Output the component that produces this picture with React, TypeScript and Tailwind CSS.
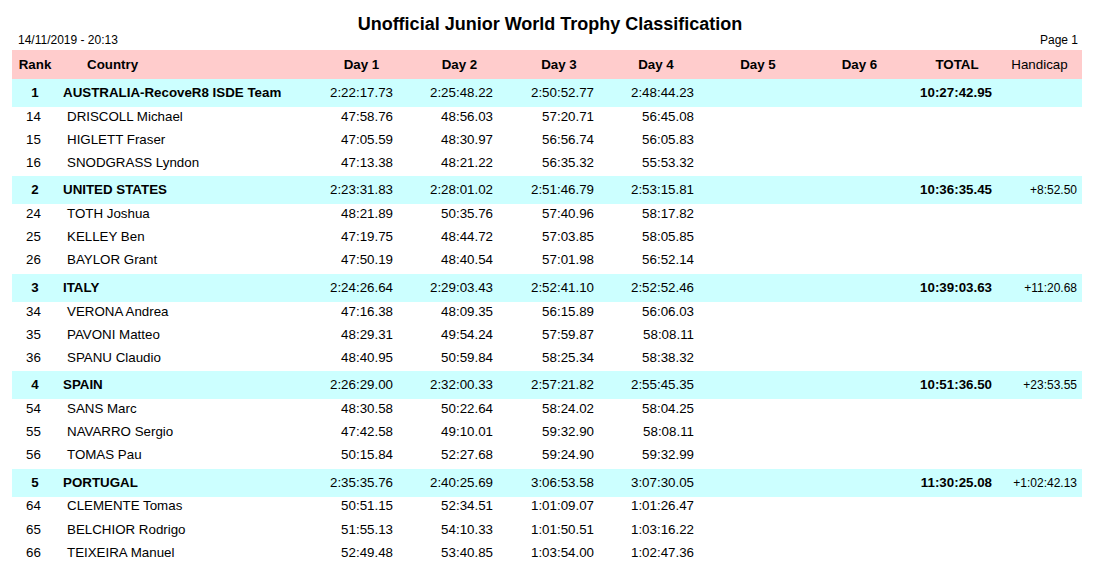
type Rider = { rank: number; name: string; days: string[] };
type Team = {
  rank: number;
  country: string;
  days: string[];
  total: string;
  handicap: string;
  riders: Rider[];
};

const teams: Team[] = [
  {
    rank: 1,
    country: "AUSTRALIA-RecoveR8 ISDE Team",
    days: ["2:22:17.73", "2:25:48.22", "2:50:52.77", "2:48:44.23"],
    total: "10:27:42.95",
    handicap: "",
    riders: [
      { rank: 14, name: "DRISCOLL Michael", days: ["47:58.76", "48:56.03", "57:20.71", "56:45.08"] },
      { rank: 15, name: "HIGLETT Fraser", days: ["47:05.59", "48:30.97", "56:56.74", "56:05.83"] },
      { rank: 16, name: "SNODGRASS Lyndon", days: ["47:13.38", "48:21.22", "56:35.32", "55:53.32"] },
    ],
  },
  {
    rank: 2,
    country: "UNITED STATES",
    days: ["2:23:31.83", "2:28:01.02", "2:51:46.79", "2:53:15.81"],
    total: "10:36:35.45",
    handicap: "+8:52.50",
    riders: [
      { rank: 24, name: "TOTH Joshua", days: ["48:21.89", "50:35.76", "57:40.96", "58:17.82"] },
      { rank: 25, name: "KELLEY Ben", days: ["47:19.75", "48:44.72", "57:03.85", "58:05.85"] },
      { rank: 26, name: "BAYLOR Grant", days: ["47:50.19", "48:40.54", "57:01.98", "56:52.14"] },
    ],
  },
  {
    rank: 3,
    country: "ITALY",
    days: ["2:24:26.64", "2:29:03.43", "2:52:41.10", "2:52:52.46"],
    total: "10:39:03.63",
    handicap: "+11:20.68",
    riders: [
      { rank: 34, name: "VERONA Andrea", days: ["47:16.38", "48:09.35", "56:15.89", "56:06.03"] },
      { rank: 35, name: "PAVONI Matteo", days: ["48:29.31", "49:54.24", "57:59.87", "58:08.11"] },
      { rank: 36, name: "SPANU Claudio", days: ["48:40.95", "50:59.84", "58:25.34", "58:38.32"] },
    ],
  },
  {
    rank: 4,
    country: "SPAIN",
    days: ["2:26:29.00", "2:32:00.33", "2:57:21.82", "2:55:45.35"],
    total: "10:51:36.50",
    handicap: "+23:53.55",
    riders: [
      { rank: 54, name: "SANS Marc", days: ["48:30.58", "50:22.64", "58:24.02", "58:04.25"] },
      { rank: 55, name: "NAVARRO Sergio", days: ["47:42.58", "49:10.01", "59:32.90", "58:08.11"] },
      { rank: 56, name: "TOMAS Pau", days: ["50:15.84", "52:27.68", "59:24.90", "59:32.99"] },
    ],
  },
  {
    rank: 5,
    country: "PORTUGAL",
    days: ["2:35:35.76", "2:40:25.69", "3:06:53.58", "3:07:30.05"],
    total: "11:30:25.08",
    handicap: "+1:02:42.13",
    riders: [
      { rank: 64, name: "CLEMENTE Tomas", days: ["50:51.15", "52:34.51", "1:01:09.07", "1:01:26.47"] },
      { rank: 65, name: "BELCHIOR Rodrigo", days: ["51:55.13", "54:10.33", "1:01:50.51", "1:03:16.22"] },
      { rank: 66, name: "TEIXEIRA Manuel", days: ["52:49.48", "53:40.85", "1:03:54.00", "1:02:47.36"] },
    ],
  },
];

// body column widths (value right-aligned)
const dayWidths = ["w-[81px]", "w-[100px]", "w-[101px]", "w-[100px]"];

function DayCells({ days }: { days: string[] }) {
  return (
    <>
      {days.map((d, i) => (
        <div key={i} className={`${dayWidths[i]} shrink-0 text-right`}>
          {d}
        </div>
      ))}
      {/* Day 5 / Day 6 are empty */}
      <div className="w-[100px] shrink-0" />
      <div className="w-[100px] shrink-0" />
    </>
  );
}

function TeamRow({ team }: { team: Team }) {
  return (
    <div className="flex h-[28px] items-center bg-[#ccffff]">
      <div className="w-[46px] shrink-0 text-center font-bold">{team.rank}</div>
      <div className="w-[254px] shrink-0 pl-[5px] font-bold">{team.country}</div>
      <DayCells days={team.days} />
      <div className="w-[98px] shrink-0 text-right font-bold">{team.total}</div>
      <div className="w-[85px] shrink-0 text-right text-[12px]">{team.handicap}</div>
    </div>
  );
}

function RiderRow({ rider }: { rider: Rider }) {
  return (
    <div className="flex h-[23.17px] items-center pb-[4px]">
      <div className="w-[46px] shrink-0 pl-[14px]">{rider.rank}</div>
      <div className="w-[254px] shrink-0 pl-[9px]">{rider.name}</div>
      <DayCells days={rider.days} />
    </div>
  );
}

export default function App() {
  return (
    <div className="h-[564px] w-[1094px] overflow-hidden bg-white text-black font-['Liberation_Sans',Arial,sans-serif]">
      {/* Title */}
      <div className="pt-[15px] pl-[6px] text-center text-[18px] font-bold leading-[18px]">
        Unofficial Junior World Trophy Classification
      </div>

      {/* Date / page line */}
      <div className="flex justify-between pl-[18px] pr-[16px] text-[12px] leading-[14px]">
        <span>14/11/2019 - 20:13</span>
        <span>Page 1</span>
      </div>

      {/* Table */}
      <div className="mx-[12px] mt-[3px] w-[1070px] text-[13.33px] leading-[16px]">
        <div className="flex h-[29px] items-center bg-[#ffcccc] font-bold">
          <div className="w-[46px] shrink-0 text-center">Rank</div>
          <div className="w-[254px] shrink-0 pl-[29px]">Country</div>
          <div className="w-[99px] shrink-0 text-center">Day 1</div>
          <div className="w-[97px] shrink-0 text-center">Day 2</div>
          <div className="w-[102px] shrink-0 text-center">Day 3</div>
          <div className="w-[92px] shrink-0 text-center">Day 4</div>
          <div className="w-[112px] shrink-0 text-center">Day 5</div>
          <div className="w-[91px] shrink-0 text-center">Day 6</div>
          <div className="w-[104px] shrink-0 text-center">TOTAL</div>
          <div className="w-[61px] shrink-0 text-center font-normal">Handicap</div>
        </div>

        {teams.map((team) => (
          <div key={team.rank}>
            <TeamRow team={team} />
            {team.riders.map((r) => (
              <RiderRow key={r.rank} rider={r} />
            ))}
          </div>
        ))}
      </div>
    </div>
  );
}
